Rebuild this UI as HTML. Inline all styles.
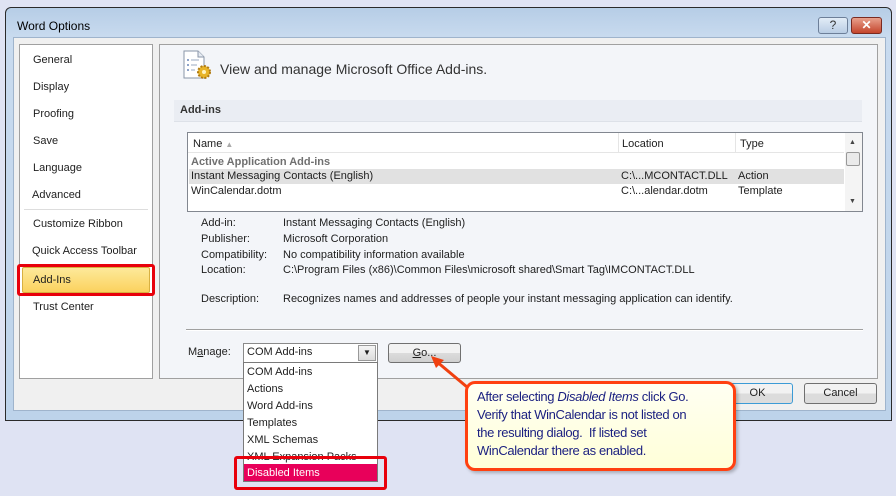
<!DOCTYPE html>
<html><head><meta charset="utf-8"><style>
*{box-sizing:border-box;margin:0;padding:0}
body{width:896px;height:496px;background:#dfe3f3;position:relative;overflow:hidden;font-family:"Liberation Sans",sans-serif;font-size:11px;color:#1e1e1e}
.a{position:absolute}
.t{position:absolute;white-space:nowrap;font-size:11px}
</style></head><body>
<div class="a" style="left:5px;top:7px;width:887px;height:414px;border:1px solid #2a2a2a;border-radius:6px 6px 0 0;background:linear-gradient(#b6cde6,#c9dbef 30px,#bdd3ea)"></div>
<div class="t" style="left:17px;top:19px;font-size:12px;color:#000">Word Options</div>
<div class="a" style="left:818px;top:17px;width:30px;height:17px;border:1px solid #6d7f99;border-radius:3px;background:linear-gradient(#e2ecf7,#b9cde4);text-align:center;font-size:12px;line-height:15px;color:#333">?</div>
<div class="a" style="left:851px;top:17px;width:31px;height:17px;border:1px solid #7a2a20;border-radius:3px;background:linear-gradient(#e8a08c,#c4452c);text-align:center;font-size:12px;line-height:15px;color:#fff;font-weight:bold">✕</div>
<div class="a" style="left:13px;top:37px;width:873px;height:374px;background:#f0f0f0;border:1px solid #9fb4cc"></div>
<div class="a" style="left:19px;top:44px;width:134px;height:335px;background:#fff;border:1px solid #a0a0a0"></div>
<div class="t" style="left:33px;top:54px">General</div>
<div class="t" style="left:33px;top:81px">Display</div>
<div class="t" style="left:33px;top:108px">Proofing</div>
<div class="t" style="left:33px;top:135px">Save</div>
<div class="t" style="left:33px;top:162px">Language</div>
<div class="t" style="left:32px;top:189px">Advanced</div>
<div class="a" style="left:24px;top:209px;width:124px;height:1px;background:#ddd"></div>
<div class="t" style="left:33px;top:218px">Customize Ribbon</div>
<div class="t" style="left:32px;top:245px">Quick Access Toolbar</div>
<div class="a" style="left:17px;top:264px;width:138px;height:32px;border:3px solid #e8000b;border-radius:3px"></div>
<div class="a" style="left:22px;top:267px;width:128px;height:26px;border:1px solid #d8b040;border-radius:2px;background:linear-gradient(#fde99a,#fbd25e)"></div>
<div class="t" style="left:33px;top:274px">Add-Ins</div>
<div class="t" style="left:33px;top:301px">Trust Center</div>
<div class="a" style="left:159px;top:44px;width:719px;height:335px;background:#f3f5f9;border:1px solid #a0a0a0"></div>
<svg class="a" style="left:182px;top:50px" width="32" height="30" viewBox="0 0 32 30">
<path d="M2 1h14l6 6v21H2z" fill="#fff" stroke="#8a96a8"/><path d="M16 1v6h6" fill="#e6ebf2" stroke="#8a96a8"/>
<g fill="#6a86b8"><circle cx="6" cy="10" r="1"/><circle cx="6" cy="15" r="1"/><circle cx="6" cy="20" r="1"/></g>
<g stroke="#9aa8c0"><path d="M9 10h8M9 15h6M9 20h4"/></g>
<circle cx="22" cy="22" r="6" fill="#e8b428" stroke="#b07a10" stroke-width="2" stroke-dasharray="2 1.5"/><circle cx="22" cy="22" r="2" fill="#fff3c0"/></svg>
<div class="t" style="left:220px;top:61px;font-size:14px;color:#333">View and manage Microsoft Office Add-ins.</div>
<div class="a" style="left:174px;top:100px;width:688px;height:22px;background:#eaedf3;border-bottom:1px solid #dde1e8"></div>
<div class="t" style="left:180px;top:104px;font-weight:bold;color:#333">Add-ins</div>
<div class="a" style="left:187px;top:132px;width:676px;height:80px;background:#fff;border:1px solid #828790"></div>
<div class="a" style="left:188px;top:152px;width:656px;height:1px;background:#e5e5e5"></div>
<div class="a" style="left:618px;top:133px;width:1px;height:19px;background:#e5e5e5"></div>
<div class="a" style="left:735px;top:133px;width:1px;height:19px;background:#e5e5e5"></div>
<div class="t" style="left:193px;top:138px">Name <span style="color:#aaa;font-size:8px">▲</span></div>
<div class="t" style="left:622px;top:138px">Location</div>
<div class="t" style="left:740px;top:138px">Type</div>
<div class="t" style="left:191px;top:156px;color:#707070;font-weight:bold">Active Application Add-ins</div>
<div class="a" style="left:189px;top:169px;width:655px;height:15px;background:#e1e1e1"></div>
<div class="t" style="left:191px;top:170px">Instant Messaging Contacts (English)</div>
<div class="t" style="left:621px;top:170px">C:\...MCONTACT.DLL</div>
<div class="t" style="left:738px;top:170px">Action</div>
<div class="t" style="left:191px;top:185px">WinCalendar.dotm</div>
<div class="t" style="left:621px;top:185px">C:\...alendar.dotm</div>
<div class="t" style="left:738px;top:185px">Template</div>
<div class="a" style="left:845px;top:133px;width:17px;height:78px;background:#f4f4f4"></div>
<div class="t" style="left:849px;top:139px;font-size:7px;color:#444">▲</div>
<div class="a" style="left:846px;top:152px;width:14px;height:14px;border:1px solid #999;border-radius:2px;background:#eaeaea"></div>
<div class="t" style="left:849px;top:198px;font-size:7px;color:#444">▼</div>
<div class="t" style="left:201px;top:217px">Add-in:</div><div class="t" style="left:283px;top:217px">Instant Messaging Contacts (English)</div>
<div class="t" style="left:201px;top:233px">Publisher:</div><div class="t" style="left:283px;top:233px">Microsoft Corporation</div>
<div class="t" style="left:201px;top:249px">Compatibility:</div><div class="t" style="left:283px;top:249px">No compatibility information available</div>
<div class="t" style="left:201px;top:264px">Location:</div><div class="t" style="left:283px;top:264px">C:\Program Files (x86)\Common Files\microsoft shared\Smart Tag\IMCONTACT.DLL</div>
<div class="t" style="left:201px;top:293px">Description:</div><div class="t" style="left:283px;top:293px">Recognizes names and addresses of people your instant messaging application can identify.</div>
<div class="a" style="left:186px;top:329px;width:677px;height:2px;background:#a0a0a0;border-bottom:1px solid #fff"></div>
<div class="t" style="left:188px;top:346px">M<u>a</u>nage:</div>
<div class="a" style="left:243px;top:343px;width:135px;height:20px;background:#fff;border:1px solid #8a8a8a"></div>
<div class="t" style="left:247px;top:346px">COM Add-ins</div>
<div class="a" style="left:358px;top:345px;width:18px;height:16px;border:1px solid #999;background:linear-gradient(#f5f5f5,#dcdcdc);text-align:center;font-size:8px;line-height:14px">▼</div>
<div class="a" style="left:388px;top:343px;width:73px;height:20px;border:1px solid #707070;border-radius:3px;background:linear-gradient(#f2f2f2 50%,#dcdcdc 50%,#d0d0d0);text-align:center;line-height:18px"><u>G</u>o...</div>
<div class="a" style="left:700px;top:383px;width:93px;height:21px;border:1px solid #3c9bd6;border-radius:3px;background:linear-gradient(#f2f2f2 50%,#dcdcdc 50%);text-align:center;line-height:19px;padding-left:22px">OK</div>
<div class="a" style="left:804px;top:383px;width:73px;height:21px;border:1px solid #707070;border-radius:3px;background:linear-gradient(#f2f2f2 50%,#dcdcdc 50%);text-align:center;line-height:19px">Cancel</div>
<div class="a" style="left:243px;top:362px;width:135px;height:120px;background:#fff;border:1px solid #7a7a7a"></div>
<div class="t" style="left:247px;top:366px">COM Add-ins</div>
<div class="t" style="left:247px;top:383px">Actions</div>
<div class="t" style="left:247px;top:400px">Word Add-ins</div>
<div class="t" style="left:247px;top:417px">Templates</div>
<div class="t" style="left:247px;top:434px">XML Schemas</div>
<div class="t" style="left:247px;top:451px">XML Expansion Packs</div>
<div class="a" style="left:244px;top:464px;width:133px;height:17px;background:#e8005a"></div>
<div class="t" style="left:247px;top:467px;color:#fff">Disabled Items</div>
<div class="a" style="left:234px;top:456px;width:153px;height:34px;border:3px solid #e8000b;border-radius:3px"></div>
<svg class="a" style="left:420px;top:345px" width="60" height="50"><path d="M47 42L16 16" stroke="#f04010" stroke-width="3"/><path d="M11 11l13 4-8 8z" fill="#f04010"/></svg>
<div class="a" style="left:465px;top:381px;width:271px;height:90px;background:linear-gradient(#fffff2,#ffffd8);border:3px solid #ff4010;border-radius:10px;box-shadow:2px 2px 3px rgba(0,0,0,.25)"></div>
<div class="a" style="left:477px;top:388px;font-family:'Liberation Sans',sans-serif;font-size:13px;line-height:18px;color:#1a1f80;letter-spacing:-0.35px;white-space:nowrap">After selecting <i>Disabled Items</i> click Go.<br>Verify that WinCalendar is not listed on<br>the resulting dialog.&nbsp; If listed set<br>WinCalendar there as enabled.</div>
</body></html>
